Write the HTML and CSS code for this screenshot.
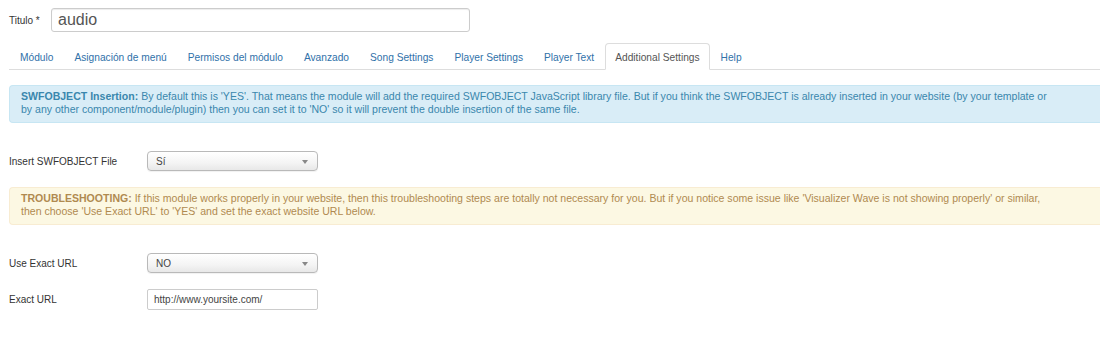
FILE: index.html
```html
<!DOCTYPE html>
<html lang="es">
<head>
  <meta charset="UTF-8">
  <title>Módulo</title>
  <link rel="stylesheet" href="styles.css">
</head>
<body>

<div class="page">
  <div class="title-row">
    <label class="title-label" for="jform_title">Titulo *</label>
    <input class="title-input" id="jform_title" type="text" value="audio">
  </div>

  <ul class="nav-tabs">
    <li><a href="#">Módulo</a></li>
    <li><a href="#">Asignación de menú</a></li>
    <li><a href="#">Permisos del módulo</a></li>
    <li><a href="#">Avanzado</a></li>
    <li><a href="#">Song Settings</a></li>
    <li><a href="#">Player Settings</a></li>
    <li><a href="#">Player Text</a></li>
    <li class="active"><a href="#">Additional Settings</a></li>
    <li><a href="#">Help</a></li>
  </ul>

  <div class="alert alert-info">
    <strong>SWFOBJECT Insertion:</strong> By default this is 'YES'. That means the module will add the required SWFOBJECT JavaScript library file. But if you think the SWFOBJECT is already inserted in your website (by your template or<br>
    by any other component/module/plugin) then you can set it to 'NO' so it will prevent the double insertion of the same file.
  </div>

  <div class="control-group first">
    <div class="control-label">Insert SWFOBJECT File</div>
    <div class="controls">
      <span class="select"><span class="select-text">Sí</span></span>
    </div>
  </div>

  <div class="alert alert-warning">
    <strong>TROUBLESHOOTING:</strong> If this module works properly in your website, then this troubleshooting steps are totally not necessary for you. But if you notice some issue like 'Visualizer Wave is not showing properly' or similar,<br>
    then choose 'Use Exact URL' to 'YES' and set the exact website URL below.
  </div>

  <div class="control-group second">
    <div class="control-label">Use Exact URL</div>
    <div class="controls">
      <span class="select"><span class="select-text">NO</span></span>
    </div>
  </div>

  <div class="control-group">
    <div class="control-label">Exact URL</div>
    <div class="controls">
      <input class="text-input" type="text" value="http://www.yoursite.com/">
    </div>
  </div>
</div>

</body>
</html>
```

FILE: styles.css
```css
* {
  margin: 0;
  padding: 0;
  box-sizing: border-box;
  list-style: none;
}

body {
  font-family: "Liberation Sans", Arial, sans-serif;
  font-size: 10px;
  line-height: 13px;
  color: #333;
  background-color: #fff;
}

.page {
  padding: 8px 0 0 9px;
}

/* titulo */
.title-row {
  display: flex;
  align-items: center;
  gap: 9px;
}

.title-label {
  width: 33px;
  font-size: 10px;
}

.title-input {
  width: 419px;
  height: 24px;
  padding: 0 6px;
  border: 1px solid #ccc;
  border-radius: 3px;
  box-shadow: inset 0 1px 1px rgba(0,0,0,.075);
  font-family: "Liberation Sans", Arial, sans-serif;
  font-size: 16px;
  color: #555;
}

/* tabs */
.nav-tabs {
  display: flex;
  gap: 1px;
  margin-top: 11px;
  padding-left: 1px;
  border-bottom: 1px solid #ddd;
}

.nav-tabs li {
  margin-bottom: -1px;
}

.nav-tabs a {
  display: block;
  height: 27px;
  padding: 7px 9px 0;
  border: 1px solid transparent;
  border-radius: 4px 4px 0 0;
  color: #3071a9;
  font-size: 10.2px;
  text-decoration: none;
}

.nav-tabs li.active a {
  color: #555;
  background-color: #fff;
  border-color: #ddd #ddd transparent;
}

/* alerts */
.alert {
  padding: 4px 12px 6px 11px;
  border: 1px solid;
  border-right: 0;
  border-radius: 4px 0 0 4px;
  font-size: 10.55px;
  white-space: nowrap;
}

.alert-info {
  margin-top: 15px;
  background-color: #d9edf7;
  border-color: #c7e6f3;
  color: #3a87ad;
}

.alert-warning {
  margin-top: 16px;
  background-color: #fcf8e3;
  border-color: #f8ecd2;
  color: #b08a50;
}

/* form rows */
.control-group {
  display: flex;
  align-items: center;
  margin-top: 16px;
}

.control-group.first {
  margin-top: 28px;
}

.control-group.second {
  margin-top: 28px;
}

.control-label {
  width: 138px;
}

.select {
  position: relative;
  display: block;
  width: 171px;
  height: 20px;
  padding: 3px 8px;
  border: 1px solid #b9b9b9;
  border-radius: 4px;
  background: linear-gradient(#fff 0%, #f4f4f4 60%, #e8e8e8 100%);
  box-shadow: 0 1px 1px rgba(0,0,0,.06);
  color: #444;
}

.select::after {
  content: "";
  position: absolute;
  right: 9px;
  top: 8px;
  border-left: 3px solid transparent;
  border-right: 3px solid transparent;
  border-top: 4px solid #888;
}

.text-input {
  width: 171px;
  height: 21px;
  padding: 0 6px;
  border: 1px solid #ccc;
  border-radius: 2px;
  font-family: "Liberation Sans", Arial, sans-serif;
  font-size: 10px;
  color: #444;
}
```
